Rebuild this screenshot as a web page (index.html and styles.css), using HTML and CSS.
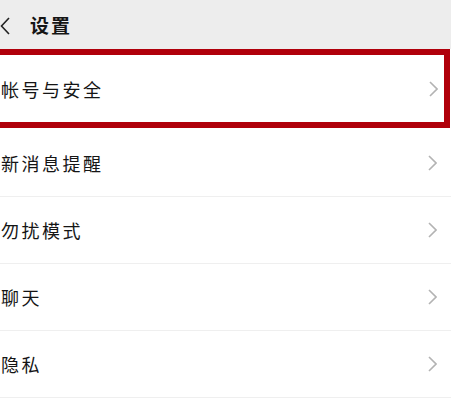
FILE: index.html
```html
<!DOCTYPE html>
<html lang="zh-CN">
<head>
<meta charset="utf-8">
<title>设置</title>
<link rel="stylesheet" href="styles.css">
</head>
<body>
<header class="topbar">
  <svg class="back" width="10" height="18" viewBox="0 0 10 18"><path d="M9 1 L1.5 9 L9 17" fill="none" stroke="#222" stroke-width="1.6"/></svg>
  <span class="title">设置</span>
</header>
<main class="list">
  <div class="row row-hl">
    <span class="label">帐号与安全</span>
    <svg class="chev" width="9" height="16" viewBox="0 0 9 16"><path d="M1 1 L8 8 L1 15" fill="none" stroke="#b3b3b3" stroke-width="1.6"/></svg>
  </div>
  <div class="row row-first">
    <span class="label">新消息提醒</span>
    <svg class="chev" width="9" height="16" viewBox="0 0 9 16"><path d="M1 1 L8 8 L1 15" fill="none" stroke="#b3b3b3" stroke-width="1.6"/></svg>
  </div>
  <div class="row">
    <span class="label">勿扰模式</span>
    <svg class="chev" width="9" height="16" viewBox="0 0 9 16"><path d="M1 1 L8 8 L1 15" fill="none" stroke="#b3b3b3" stroke-width="1.6"/></svg>
  </div>
  <div class="row">
    <span class="label">聊天</span>
    <svg class="chev" width="9" height="16" viewBox="0 0 9 16"><path d="M1 1 L8 8 L1 15" fill="none" stroke="#b3b3b3" stroke-width="1.6"/></svg>
  </div>
  <div class="row">
    <span class="label">隐私</span>
    <svg class="chev" width="9" height="16" viewBox="0 0 9 16"><path d="M1 1 L8 8 L1 15" fill="none" stroke="#b3b3b3" stroke-width="1.6"/></svg>
  </div>
</main>
</body>
</html>
```
FILE: styles.css
```css
html, body {
  margin: 0;
  padding: 0;
  background: #ffffff;
  overflow: hidden;
}
body {
  width: 451px;
  height: 412px;
  font-family: "Noto Sans CJK SC", "Noto Sans", sans-serif;
  color: #151515;
}
.topbar {
  height: 49px;
  background: #ededed;
  display: flex;
  align-items: center;
  gap: 20px;
  padding-left: 0;
  box-sizing: border-box;
}
.back {
  display: block;
  margin-top: 2px;
}
.title {
  font-size: 19px;
  font-weight: 700;
  letter-spacing: 2px;
  line-height: 1;
}
.list {
  display: flex;
  flex-direction: column;
}
.row {
  display: flex;
  align-items: center;
  justify-content: space-between;
  height: 67px;
  box-sizing: border-box;
  border-bottom: 1px solid #efefef;
  padding: 0 14px 0 1px;
}
.row-first {
  margin-top: 2px;
}
.row-hl {
  height: 79px;
  border: 6px solid #b0000b;
  margin-left: -6px;
  width: 456px;
  padding: 0 6px 0 1px;
}
.label {
  font-size: 18px;
  letter-spacing: 2.5px;
  line-height: 1;
}
.chev {
  display: block;
}
```
